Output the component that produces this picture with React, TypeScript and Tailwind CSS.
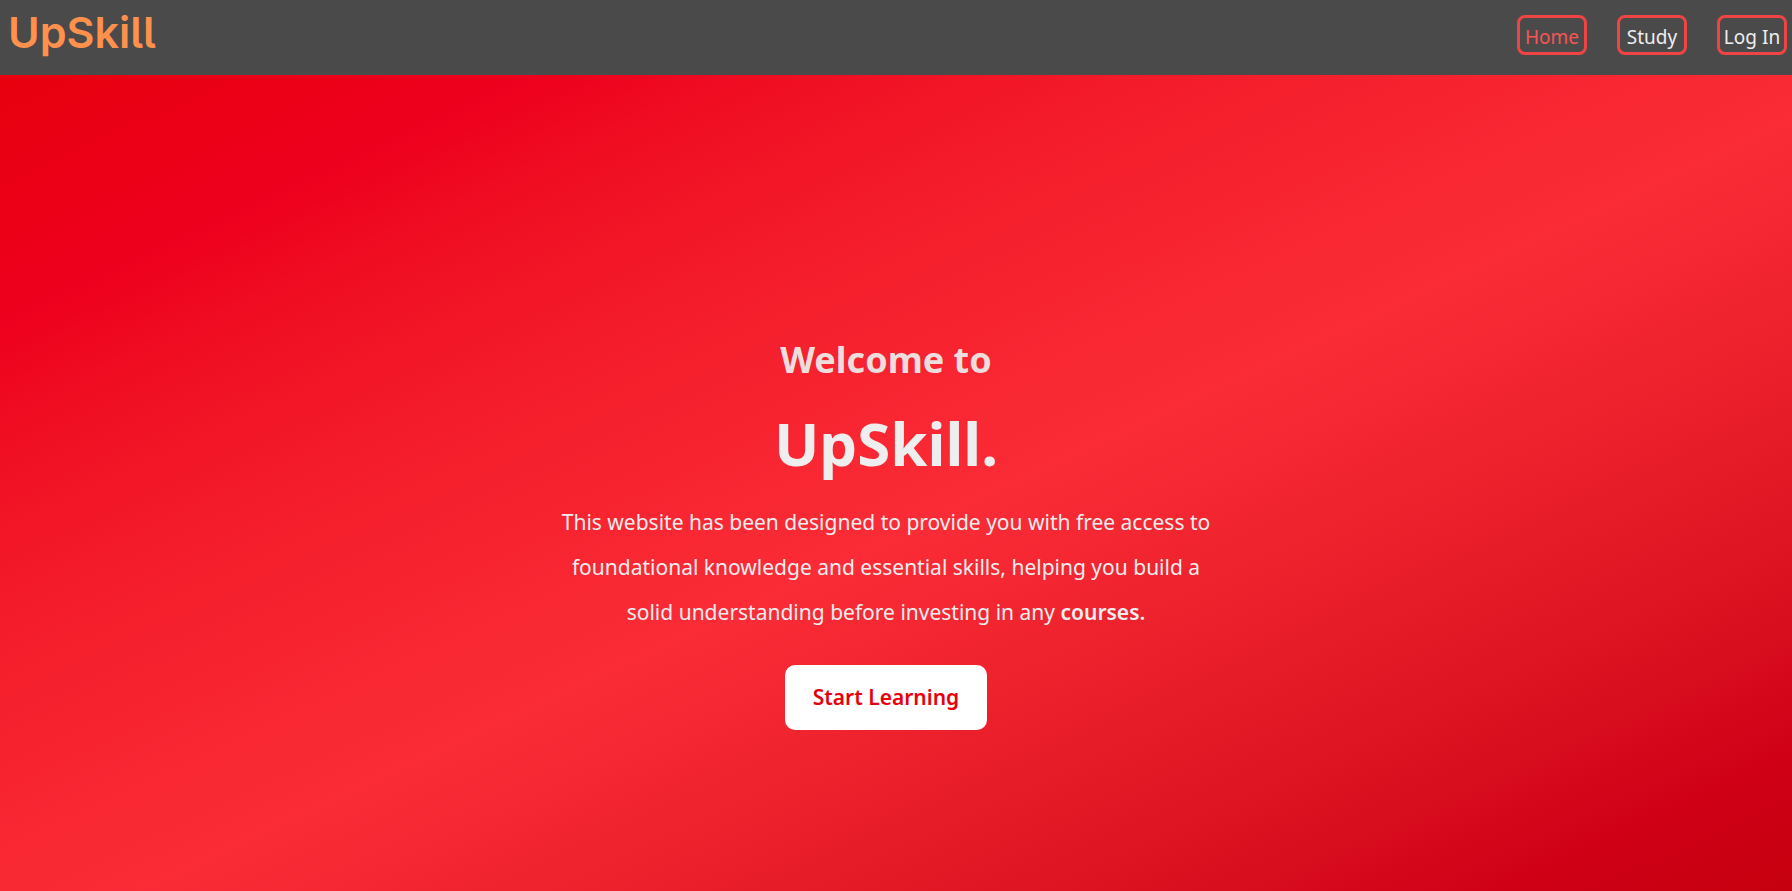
const links = [
  { label: "Home", href: "#home", active: true },
  { label: "Study", href: "#study", active: false },
  { label: "Log In", href: "#login", active: false },
];

function Header() {
  return (
    <header className="flex h-[75px] shrink-0 items-start justify-between bg-[#4a4a4a] pr-[5px] pl-2">
      <a
        href="#home"
        className="pt-2 font-['Inter',sans-serif] text-[43px] leading-[48px] font-semibold text-[#ff914d] [font-feature-settings:'cv05']"
      >
        UpSkill
      </a>
      <nav className="flex gap-[30px] pt-[15px]">
        {links.map((link) => (
          <a
            key={link.label}
            href={link.href}
            className={`flex h-10 w-[70px] items-center justify-center rounded-lg border-3 border-[#ef4444] pt-1 text-[19px] leading-none whitespace-nowrap ${
              link.active ? "text-[#f75555]" : "text-[#eeeeee]"
            }`}
          >
            {link.label}
          </a>
        ))}
      </nav>
    </header>
  );
}

function Hero() {
  return (
    <section className="flex min-h-screen shrink-0 flex-col items-center bg-linear-155 from-red-600 from-[-2%] via-red-500 via-[51%] to-red-700 pt-[253px] pr-5 text-center text-[#eeeeee]">
      <h2 className="text-[36px] leading-[64px] font-bold text-[#eedddd]">Welcome to</h2>
      <h1 className="mt-[6px] text-[60px] leading-[90px] font-bold">UpSkill.</h1>
      <p className="mt-3 max-w-[670px] text-[21px] leading-[45px]">
        This website has been designed to provide you with free access to foundational knowledge
        and essential skills, helping you build a solid understanding before investing in any{" "}
        <strong className="font-semibold">courses.</strong>
      </p>
      <button
        type="button"
        className="mt-[30px] h-[65px] rounded-[10px] bg-white px-7 text-[21px] font-semibold text-red-600"
      >
        Start Learning
      </button>
    </section>
  );
}

export default function App() {
  return (
    <main className="flex h-screen flex-col overflow-hidden font-['Noto_Sans',sans-serif]">
      <Header />
      <Hero />
    </main>
  );
}
